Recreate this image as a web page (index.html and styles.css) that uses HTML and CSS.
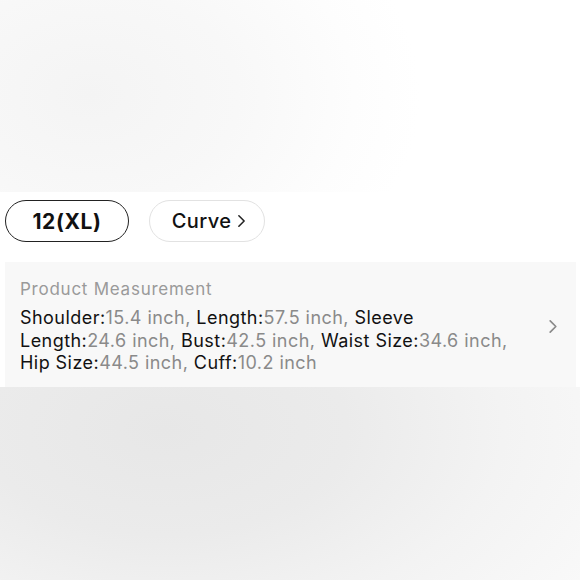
FILE: index.html
```html
<!DOCTYPE html>
<html>
<head>
<meta charset="utf-8">
<link rel="stylesheet" href="styles.css">
</head>
<body>
<div class="page">
  <div class="hero"></div>
  <div class="sizes">
    <div class="chip chip-active">12(XL)</div>
    <div class="chip chip-link">Curve<svg class="chev-sm" viewBox="0 0 10 16" width="9" height="14"><path d="M2 2l6 6-6 6" fill="none" stroke="#222" stroke-width="1.8" stroke-linecap="round" stroke-linejoin="round"/></svg></div>
  </div>
  <div class="measure">
    <div class="measure-body">
      <div class="measure-title">Product Measurement</div>
      <div class="measure-text"><span class="k">Shoulder:</span><span class="v">15.4 inch, </span><span class="k">Length:</span><span class="v">57.5 inch, </span><span class="k">Sleeve Length:</span><span class="v">24.6 inch, </span><span class="k">Bust:</span><span class="v">42.5 inch, </span><span class="k">Waist Size:</span><span class="v">34.6 inch, </span><span class="k">Hip Size:</span><span class="v">44.5 inch, </span><span class="k">Cuff:</span><span class="v">10.2 inch</span></div>
    </div>
    <svg class="chev" viewBox="0 0 10 16" width="10" height="15"><path d="M2 2l6 6-6 6" fill="none" stroke="#8a8a8a" stroke-width="1.8" stroke-linecap="round" stroke-linejoin="round"/></svg>
  </div>
  <div class="footer"></div>
</div>
</body>
</html>
```
FILE: styles.css
```css
html, body { margin: 0; padding: 0; }
body {
  width: 580px;
  height: 580px;
  overflow: hidden;
  background: #ffffff;
  font-family: Inter, "Liberation Sans", Arial, sans-serif;
}
.page { display: flex; flex-direction: column; width: 580px; height: 580px; }
.hero {
  height: 192px;
  background: radial-gradient(ellipse 330px 240px at 90px 95px, #f4f4f4 0%, #f8f8f8 45%, #fdfdfd 80%, #ffffff 100%);
}
.sizes {
  display: flex;
  gap: 20px;
  padding: 8px 5px 0 5px;
  height: 70px;
  box-sizing: border-box;
}
.chip {
  height: 42px;
  box-sizing: border-box;
  border-radius: 21px;
  display: flex;
  align-items: center;
  justify-content: center;
  font-size: 20px;
  color: #111;
  background: #fff;
  letter-spacing: 0.4px;
}
.chip-active {
  width: 124px;
  border: 1.6px solid #222;
  font-weight: 700;
  font-size: 21px;
  letter-spacing: 0.6px;
}
.chip-link {
  width: 116px;
  border: 1px solid #e2e2e2;
  font-weight: 500;
  gap: 6px;
  padding-left: 4px;
}
.chev-sm { display: block; }
.measure {
  margin: 0 4px 0 5px;
  height: 125px;
  box-sizing: border-box;
  background: #f8f8f8;
  display: flex;
  align-items: center;
  padding: 4px 18px 0 15px;
}
.measure-body { width: 505px; }
.measure-title {
  font-size: 17px;
  color: #9a9a9a;
  line-height: 22px;
  margin-bottom: 7px;
  letter-spacing: 0.75px;
}
.measure-text {
  font-size: 18px;
  line-height: 22.5px;
  letter-spacing: 0.45px;
}
.k { color: #111; }
.v { color: #8a8a8a; }
.chev { margin-left: auto; display: block; }
.footer {
  flex: 1;
  background: radial-gradient(ellipse 520px 300px at 165px 430px, #e7e7e7 0%, #ebebeb 35%, #f3f3f3 65%, #fafafa 100%);
  background-position: 0 -387px;
  background-size: 580px 580px;
  background-repeat: no-repeat;
}
```
